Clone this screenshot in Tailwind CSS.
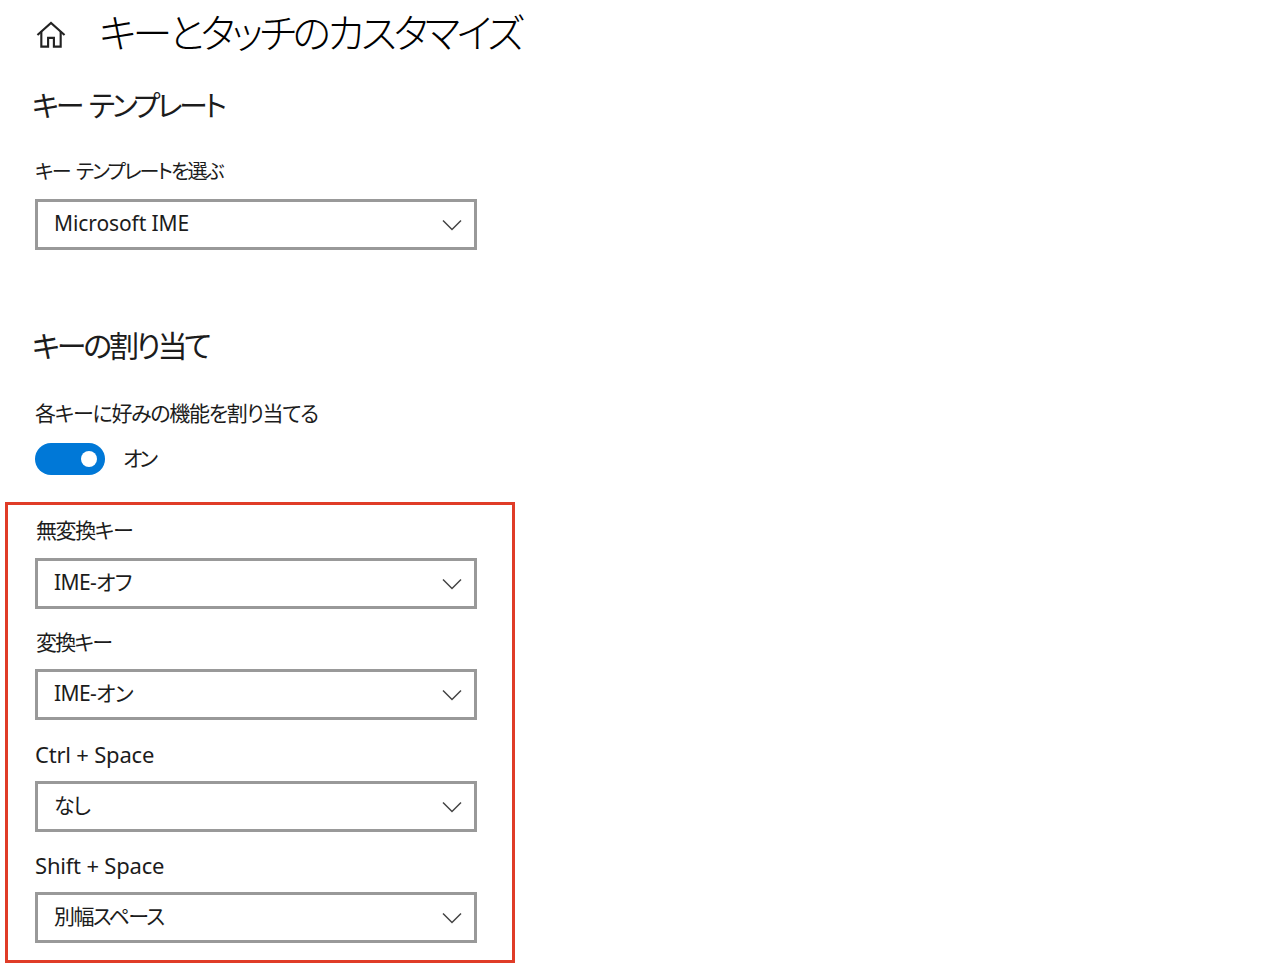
<!DOCTYPE html>
<html lang="ja">

<head>
  <meta charset="utf-8">
  <title>キーとタッチのカスタマイズ</title>
  <script src="https://cdn.jsdelivr.net/npm/@tailwindcss/browser@4"></script>
</head>

<body class="bg-white text-[#1c1c1c] font-['Noto_Sans','Noto_Sans_CJK_JP',sans-serif] [font-feature-settings:'palt']">

  <div class="w-[1280px] h-[966px] overflow-hidden pl-[5px]">

    <!-- Page title -->
    <div class="h-[66px] flex items-center pl-[31px]">
      <svg class="w-[30px] h-[30px] mt-[4px]" viewBox="0 0 31 31" fill="none" stroke="#222" stroke-width="2.2">
        <path d="M1.5 15.5 15.5 3l14 12.5"/>
        <path d="M5.5 12v15.5h7v-9h6v9h7V12"/>
      </svg>
      <h1 class="ml-[33px] -mt-[1px] text-[40px] font-light text-black tracking-[-3.6px] whitespace-nowrap">キーとタッチのカスタマイズ</h1>
    </div>

    <!-- Key template -->
    <div class="pl-[30px]">
      <h2 class="mt-[19px] h-[42px] leading-[42px] text-[29px] tracking-[-3.2px] [word-spacing:3px] -ml-[3px]">キー テンプレート</h2>
      <label class="block mt-[30px] h-[30px] leading-[30px] text-[20px] tracking-[-1.9px] [word-spacing:3px]">キー テンプレートを選ぶ</label>
      <div class="mt-[12px] w-[442px] h-[51px] border-[3px] border-[#999] flex items-center justify-between pl-[16px] pr-[12px] text-[21px] tracking-[-0.1px]">
        <span class="-mt-[1px]">Microsoft IME</span>
        <svg class="w-[20px] h-[12px]" viewBox="0 0 20 12" fill="none" stroke="#444" stroke-width="1.5"><path d="M1 1.5 10 10.5 19 1.5"/></svg>
      </div>

      <!-- Key assignment -->
      <h2 class="mt-[75px] h-[42px] leading-[42px] text-[30px] tracking-[-3.2px] -ml-[3px]">キーの割り当て</h2>
      <p class="mt-[31px] h-[30px] leading-[30px] text-[21px] tracking-[-1.3px]">各キーに好みの機能を割り当てる</p>
      <div class="mt-[15px] flex items-center h-[32px]">
        <div class="w-[70px] h-[32px] rounded-full bg-[#0078d7] flex items-center justify-end pr-[8px]">
          <div class="w-[16px] h-[16px] rounded-full bg-white"></div>
        </div>
        <span class="ml-[18px] text-[21px] tracking-[-3px]">オン</span>
      </div>
    </div>

    <!-- Highlighted dropdowns -->
    <div class="mt-[27px] w-[510px] h-[461px] border-[3px] border-[#e03c28] pl-[27px]">
      <label class="block mt-[10px] h-[30px] leading-[30px] text-[21px] tracking-[-1.4px] ml-[1px]">無変換キー</label>
      <div class="mt-[13px] w-[442px] h-[51px] border-[3px] border-[#999] flex items-center justify-between pl-[16px] pr-[12px] text-[21px] tracking-[-0.6px]">
        <span class="-mt-[2px]">IME-オフ</span>
        <svg class="w-[20px] h-[12px]" viewBox="0 0 20 12" fill="none" stroke="#444" stroke-width="1.5"><path d="M1 1.5 10 10.5 19 1.5"/></svg>
      </div>
      <label class="block mt-[18px] h-[30px] leading-[30px] text-[21px] tracking-[-1.8px] ml-[1px]">変換キー</label>
      <div class="mt-[12px] w-[442px] h-[51px] border-[3px] border-[#999] flex items-center justify-between pl-[16px] pr-[12px] text-[21px] tracking-[-0.6px]">
        <span class="-mt-[2px]">IME-オン</span>
        <svg class="w-[20px] h-[12px]" viewBox="0 0 20 12" fill="none" stroke="#444" stroke-width="1.5"><path d="M1 1.5 10 10.5 19 1.5"/></svg>
      </div>
      <label class="block mt-[19px] h-[30px] leading-[30px] text-[22px] tracking-[-0.2px]">Ctrl + Space</label>
      <div class="mt-[12px] w-[442px] h-[51px] border-[3px] border-[#999] flex items-center justify-between pl-[16px] pr-[12px] text-[21px] tracking-[-1.4px]">
        <span class="-mt-[2px]">なし</span>
        <svg class="w-[20px] h-[12px]" viewBox="0 0 20 12" fill="none" stroke="#444" stroke-width="1.5"><path d="M1 1.5 10 10.5 19 1.5"/></svg>
      </div>
      <label class="block mt-[18px] h-[30px] leading-[30px] text-[22px] tracking-[-0.2px]">Shift + Space</label>
      <div class="mt-[12px] w-[442px] h-[51px] border-[3px] border-[#999] flex items-center justify-between pl-[16px] pr-[12px] text-[21px] tracking-[-1.6px]">
        <span class="-mt-[2px]">別幅スペース</span>
        <svg class="w-[20px] h-[12px]" viewBox="0 0 20 12" fill="none" stroke="#444" stroke-width="1.5"><path d="M1 1.5 10 10.5 19 1.5"/></svg>
      </div>
    </div>

  </div>

</body>
</html>
